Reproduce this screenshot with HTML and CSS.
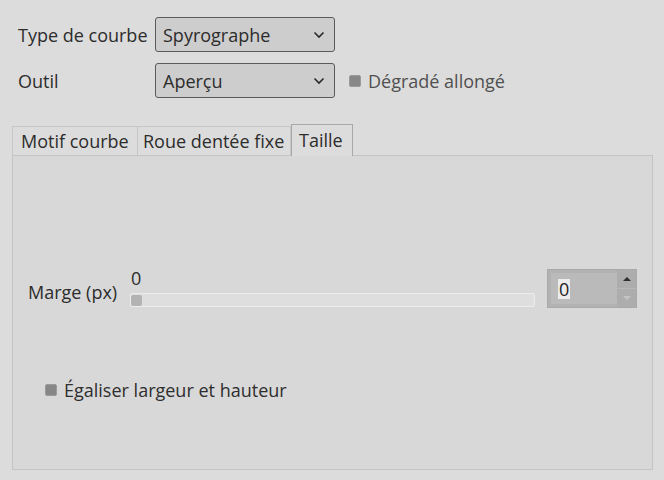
FILE: index.html
```html
<!DOCTYPE html>
<html lang="fr">
<head>
<meta charset="utf-8">
<link rel="stylesheet" href="styles.css">
</head>
<body>
<div class="top">
  <span class="lbl">Type de courbe</span>
  <div class="combo"><span>Spyrographe</span><svg class="chev" width="12" height="8" viewBox="0 0 12 8"><polyline points="1.5,1.5 6,6 10.5,1.5" fill="none" stroke="#2a2a2a" stroke-width="1.6"/></svg></div>
  <span></span>
  <span class="lbl">Outil</span>
  <div class="combo"><span>Aperçu</span><svg class="chev" width="12" height="8" viewBox="0 0 12 8"><polyline points="1.5,1.5 6,6 10.5,1.5" fill="none" stroke="#2a2a2a" stroke-width="1.6"/></svg></div>
  <label class="check dim"><span class="box"></span>Dégradé allongé</label>
</div>

<div class="notebook">
  <div class="tabs">
    <div class="tab t1">Motif courbe</div>
    <div class="tab t2">Roue dentée fixe</div>
    <div class="tab active">Taille</div>
  </div>
  <div class="panel">
    <div class="marge">
      <span class="mlbl">Marge (px)</span>
      <div class="slider">
        <span class="val">0</span>
        <div class="trough"><span class="handle"></span></div>
      </div>
      <div class="spin">
        <div class="entry"><span class="sel">0</span></div>
        <div class="btns">
          <span class="up"></span>
          <span class="down"></span>
        </div>
      </div>
    </div>
    <label class="check eq"><span class="box"></span>Égaliser largeur et hauteur</label>
  </div>
</div>
</body>
</html>
```

FILE: styles.css
```css
* { box-sizing: border-box; }
body {
  margin: 0;
  background: #dcdcdc;
  font-family: "Open Sans", "Noto Sans", sans-serif;
  font-size: 18px;
  color: #2c2c2c;
  width: 664px;
  height: 480px;
  overflow: hidden;
}
.top {
  display: grid;
  grid-template-columns: 137px 180px auto;
  row-gap: 11px;
  align-items: center;
  padding: 17px 0 0 18px;
}
.lbl { line-height: 22px; white-space: nowrap; }
.combo {
  height: 35px;
  border: 1px solid #5a5a5a;
  border-radius: 3px;
  background: #cdcdcd;
  display: flex;
  align-items: center;
  justify-content: space-between;
  padding: 0 9px 0 7px;
}
.chev { margin-top: 1px; }
.check {
  display: flex;
  align-items: center;
  gap: 7px;
  white-space: nowrap;
}
.check.dim { color: #505050; padding-left: 14px; }
.box {
  width: 12px;
  height: 12px;
  background: #878787;
  border: 1px solid #9a9a9a;
  border-radius: 2px;
}
.notebook {
  margin: 25px 0 0 12px;
  width: 641px;
}
.tabs {
  display: flex;
  align-items: flex-end;
  height: 32px;
}
.tab {
  height: 30px;
  border: 1px solid #c6c6c6;
  border-bottom: none;
  border-left: none;
  line-height: 28px;
  margin-bottom: -1px;
  white-space: nowrap;
  overflow: hidden;
}
.t1 { width: 126px; border-left: 1px solid #c6c6c6; padding-left: 8px; }
.t2 { width: 153px; padding-left: 5px; }
.tab.active {
  width: 62px;
  height: 32px;
  border: 1px solid #a8a8a8;
  border-bottom: none;
  background: #dcdcdc;
  line-height: 30px;
  padding-left: 7px;
  position: relative;
  z-index: 1;
  margin-bottom: -1px;
}
.panel {
  height: 315px;
  border: 1px solid #c4c4c4;
  background: #d8d8d8;
  padding: 113px 14px 0 15px;
}
.marge {
  display: flex;
  align-items: stretch;
  height: 39px;
}
.mlbl {
  width: 102px;
  align-self: center;
  padding-top: 6px;
  white-space: nowrap;
}
.slider {
  width: 405px;
  display: flex;
  flex-direction: column;
  justify-content: space-between;
}
.val { line-height: 20px; padding-left: 1px; margin-top: -1px; }
.trough {
  height: 14px;
  background: #dedede;
  border: 1px solid #ececec;
  border-radius: 2px;
  margin-bottom: 1px;
  padding: 1px 0 0 0;
}
.handle {
  display: block;
  width: 11px;
  height: 11px;
  background: #b3b3b3;
  border-radius: 2px;
}
.spin {
  margin-left: 12px;
  width: 90px;
  background: #b2b2b2;
  border: 1px solid #a9a9a9;
  display: flex;
  padding: 3px 0 3px 3px;
}
.entry {
  flex: 1;
  background: #bababa;
  display: flex;
  align-items: center;
  padding-left: 7px;
}
.sel {
  background: #ececec;
  line-height: 20px;
  padding: 0 1px;
  color: #222;
}
.btns {
  width: 19px;
  margin: -3px 0 -3px 0;
  display: flex;
  flex-direction: column;
  background: #adadad;
}
.btns span {
  flex: 1;
  display: flex;
  align-items: center;
  justify-content: center;
}
.up { border-bottom: 1px solid #b8b8b8; }
.up::after {
  content: "";
  border-left: 4px solid transparent;
  border-right: 4px solid transparent;
  border-bottom: 4px solid #2e2e2e;
}
.down::after {
  content: "";
  border-left: 4px solid transparent;
  border-right: 4px solid transparent;
  border-top: 4px solid #c4c4c4;
}
.check.eq {
  margin: 70px 0 0 17px;
  color: #2e2e2e;
}
```
